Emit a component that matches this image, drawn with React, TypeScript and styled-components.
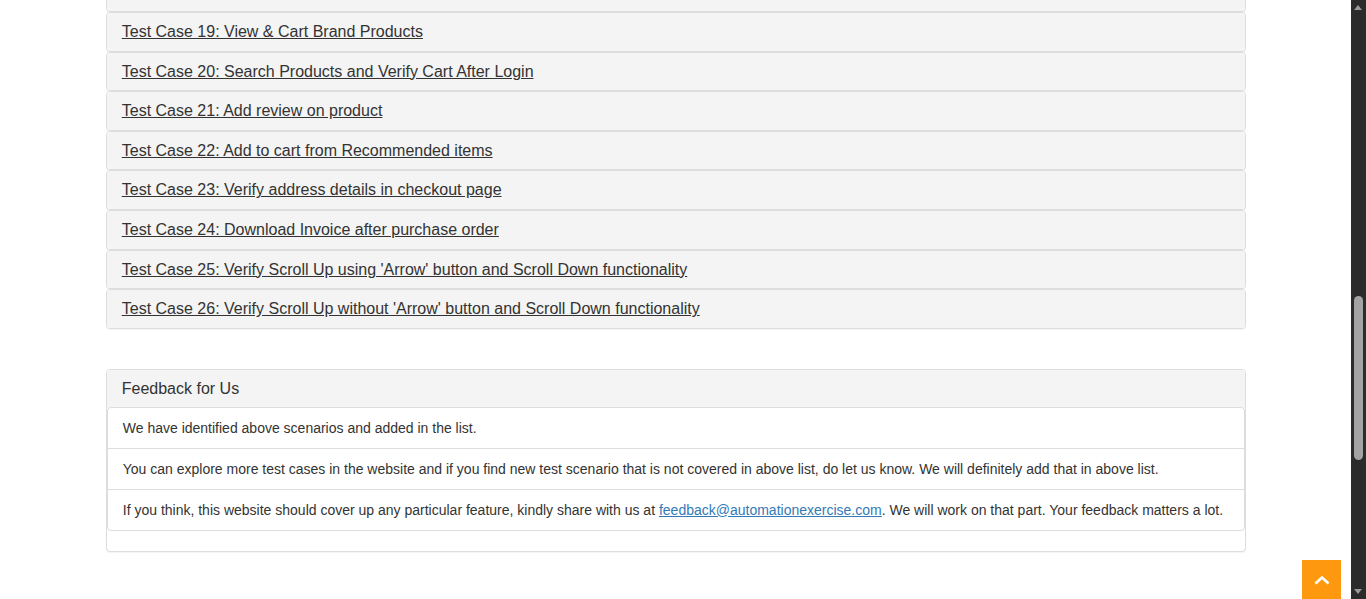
import { createGlobalStyle, styled } from 'styled-components';

const GlobalStyle = createGlobalStyle`
  html, body {
    margin: 0;
    padding: 0;
    background: #fff;
    overflow: hidden;
  }
  body {
    font-family: "Liberation Sans", Arial, Helvetica, sans-serif;
    font-size: 14px;
    line-height: 1.42857;
    color: #333;
  }
`;

const testCases = [
  'Test Case 18: View Category Products',
  'Test Case 19: View & Cart Brand Products',
  'Test Case 20: Search Products and Verify Cart After Login',
  'Test Case 21: Add review on product',
  'Test Case 22: Add to cart from Recommended items',
  'Test Case 23: Verify address details in checkout page',
  'Test Case 24: Download Invoice after purchase order',
  "Test Case 25: Verify Scroll Up using 'Arrow' button and Scroll Down functionality",
  "Test Case 26: Verify Scroll Up without 'Arrow' button and Scroll Down functionality",
];

const Page = styled.div`
  width: 1351px;
  height: 599px;
  overflow: hidden;
`;

const Container = styled.div`
  width: 1140px;
  margin: 0 auto;
  padding-left: 0.5px;
`;

// the list is scrolled: only the bottom edge of case 18 is in view
const PanelGroup = styled.div`
  margin-top: -27.6px;
  margin-bottom: 40.2px;
`;

const Panel = styled.div`
  background: #fff;
  border: 1px solid #ddd;
  border-radius: 4px;
  box-shadow: 0 1px 1px rgba(0, 0, 0, 0.05);
  overflow: hidden;
`;

const PanelHeading = styled.div`
  background: #f4f4f4;
  padding: 10px 15px;
`;

const PanelTitle = styled.h4`
  margin: 0;
  font-size: 16px;
  font-weight: 400;
  line-height: 1.1;
  color: #333;
`;

const CaseLink = styled.a`
  color: #333;
  text-decoration: underline;
  cursor: pointer;
`;

const ListGroup = styled.ul`
  list-style: none;
  margin: -1px 0 20px;
  padding: 0;
  border-radius: 4px;
`;

const ListItem = styled.li`
  padding: 10px 15px;
  border: 1px solid #ddd;
  margin-bottom: -1px;
  line-height: 20px;
  font-size: 14px;
  color: #333;
  background: #fff;

  &:first-child {
    border-top-left-radius: 4px;
    border-top-right-radius: 4px;
  }
  &:last-child {
    margin-bottom: 0;
    border-bottom-left-radius: 4px;
    border-bottom-right-radius: 4px;
  }
`;

const MailLink = styled.a`
  color: #337ab7;
  text-decoration: underline;
`;

const ScrollUp = styled.a`
  position: fixed;
  right: 25px;
  bottom: -1px;
  width: 39px;
  height: 40px;
  background: #fe980f;
  display: flex;
  align-items: center;
  justify-content: center;
`;

const Scrollbar = styled.div`
  position: fixed;
  top: 0;
  right: 0;
  width: 15px;
  height: 599px;
  background: #2b2b2b;
`;

const Thumb = styled.div`
  position: absolute;
  left: 3px;
  top: 296px;
  width: 9px;
  height: 164px;
  border-radius: 5px;
  background: #a3a3a3;
`;

const Arrow = styled.div<{ $down?: boolean }>`
  position: absolute;
  left: 3px;
  ${({ $down }) => ($down ? 'bottom: 5px;' : 'top: 5px;')}
  width: 0;
  height: 0;
  border-left: 4.5px solid transparent;
  border-right: 4.5px solid transparent;
  ${({ $down }) =>
    $down ? 'border-top: 5px solid #9a9a9a;' : 'border-bottom: 5px solid #9a9a9a;'}
`;

export default function App() {
  return (
    <>
      <GlobalStyle />
      <Page>
        <Container>
          <PanelGroup>
            {testCases.map((tc) => (
              <Panel key={tc}>
                <PanelHeading>
                  <PanelTitle>
                    <CaseLink>{tc}</CaseLink>
                  </PanelTitle>
                </PanelHeading>
              </Panel>
            ))}
          </PanelGroup>

          <Panel>
            <PanelHeading>
              <PanelTitle>Feedback for Us</PanelTitle>
            </PanelHeading>
            <ListGroup>
              <ListItem>We have identified above scenarios and added in the list.</ListItem>
              <ListItem>
                You can explore more test cases in the website and if you find new test scenario
                that is not covered in above list, do let us know. We will definitely add that in
                above list.
              </ListItem>
              <ListItem>
                If you think, this website should cover up any particular feature, kindly share
                with us at <MailLink>feedback@automationexercise.com</MailLink>. We will work on
                that part. Your feedback matters a lot.
              </ListItem>
            </ListGroup>
          </Panel>
        </Container>
      </Page>

      <ScrollUp>
        <svg width="18" height="12" viewBox="0 0 18 12">
          <path d="M2.5 9.5 L9 3.5 L15.5 9.5" fill="none" stroke="#fff" strokeWidth="2.6" />
        </svg>
      </ScrollUp>

      <Scrollbar>
        <Arrow />
        <Thumb />
        <Arrow $down />
      </Scrollbar>
    </>
  );
}
